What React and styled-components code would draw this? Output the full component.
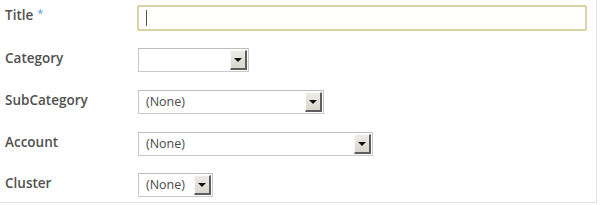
import React from 'react';
import styled, { createGlobalStyle } from 'styled-components';

const GlobalStyle = createGlobalStyle`
  html, body {
    margin: 0;
    padding: 0;
    background: #ffffff;
  }
`;

const Form = styled.div`
  width: 597px;
  height: 203px;
  box-sizing: border-box;
  border-right: 1px solid #e2e2e2;
  border-bottom: 1px solid #e2e2e2;
  display: grid;
  grid-template-columns: 137px 1fr;
  grid-auto-rows: 42px;
  font-family: 'Open Sans', 'Noto Sans', sans-serif;
`;

const Label = styled.div`
  padding: ${p => p.$top}px 0 0 5px;
  font-size: 13.5px;
  font-weight: 600;
  color: #505050;
  line-height: 16px;
`;

const Required = styled.span`
  color: #5a9ad6;
  font-weight: 400;
  font-size: 11px;
  margin-left: 4px;
  vertical-align: 3px;
`;

const Cell = styled.div`
  padding-top: ${p => p.$top}px;
`;

const TextInput = styled.div`
  width: 450px;
  height: 26px;
  box-sizing: border-box;
  border: 2px solid #dcd3a2;
  border-radius: 2px;
  background: #fffffd;
  display: flex;
  align-items: center;
  padding-left: 7px;
`;

const Caret = styled.div`
  width: 1px;
  height: 16px;
  background: #555;
`;

const Select = styled.div`
  width: ${p => p.$width}px;
  height: 24px;
  margin-left: 1px;
  box-sizing: border-box;
  border: 1px solid #c9c9c9;
  border-top-color: #bdbdbd;
  background: #fff;
  display: flex;
  align-items: stretch;
  padding: 1px;
`;

const Value = styled.div`
  flex: 1;
  padding-left: 6px;
  font-size: 12.5px;
  line-height: 20px;
  color: #4a4a4a;
  font-weight: 500;
`;

const DropButton = styled.div`
  width: 17px;
  box-sizing: border-box;
  background: linear-gradient(#ecebe6, #d9d7cf);
  border-top: 1px solid #fafafa;
  border-left: 1px solid #fafafa;
  border-right: 2px solid #5e5e5e;
  border-bottom: 2px solid #5e5e5e;
  display: flex;
  align-items: center;
  justify-content: center;

  &::after {
    content: '';
    width: 0;
    height: 0;
    border-left: 4px solid transparent;
    border-right: 4px solid transparent;
    border-top: 4px solid #111;
  }
`;

const fields = [
  { label: 'Category', width: 111, value: '' },
  { label: 'SubCategory', width: 186, value: '(None)' },
  { label: 'Account', width: 235, value: '(None)' },
  { label: 'Cluster', width: 75, value: '(None)', last: true },
];

export default function App() {
  return (
    <>
      <GlobalStyle />
      <Form>
        <Label $top={5}>
          Title<Required>*</Required>
        </Label>
        <Cell $top={5}>
          <TextInput>
            <Caret />
          </TextInput>
        </Cell>
        {fields.map(f => (
          <React.Fragment key={f.label}>
            <Label $top={f.last ? 7 : 8}>{f.label}</Label>
            <Cell $top={f.last ? 5 : 6}>
              <Select $width={f.width}>
                <Value>{f.value}</Value>
                <DropButton />
              </Select>
            </Cell>
          </React.Fragment>
        ))}
      </Form>
    </>
  );
}
